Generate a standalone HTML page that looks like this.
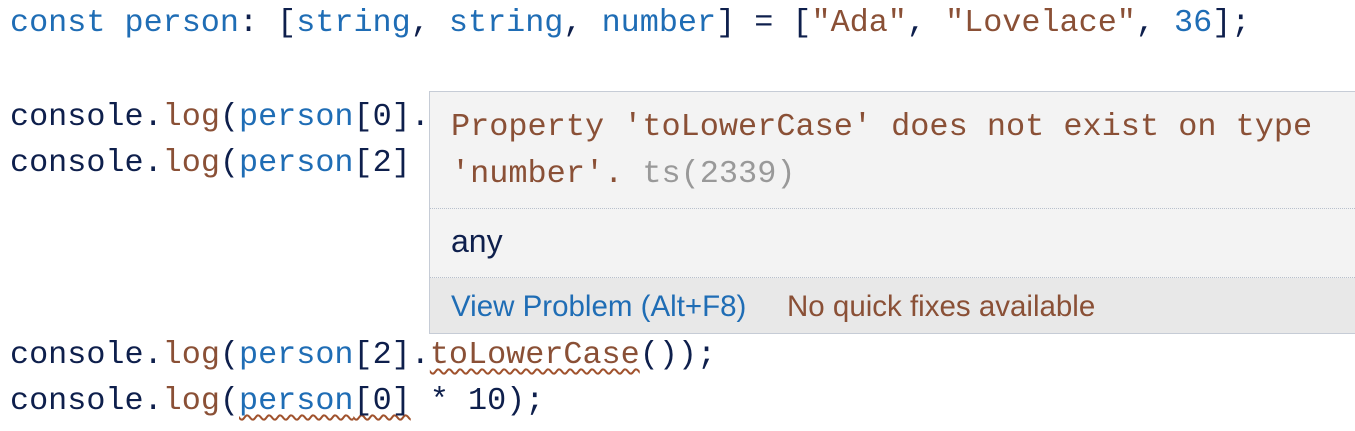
<!DOCTYPE html>
<html><head><meta charset="utf-8"><style>
body{margin:0;width:1355px;height:431px;background:#fff;overflow:hidden;position:relative;font-family:"Liberation Mono",monospace;}
.l{position:absolute;left:10px;font-size:31.8px;line-height:46px;white-space:pre;color:#0e1f4c;}
.b{color:#1f6db5}.br{color:#8a5036}.g{color:#999}
.sq{text-decoration:underline wavy #a0522d;text-decoration-thickness:1.5px;text-underline-offset:5px;text-decoration-skip-ink:none}
.pop{position:absolute;left:429px;top:91px;width:925px;height:241px;background:#f3f3f3;border:1px solid #c6ccd6;}
.m{position:absolute;left:21px;font-size:31.9px;line-height:46px;white-space:pre;color:#8a5036}
.sep{position:absolute;left:0;right:0;border-top:1px dotted #b8c0cc}
.s{position:absolute;font-family:"Liberation Sans",sans-serif;white-space:pre}
</style></head><body>
<div class="l" style="top:0"><span class="b">const person</span>: [<span class="b">string</span>, <span class="b">string</span>, <span class="b">number</span>] = [<span class="br">"Ada"</span>, <span class="br">"Lovelace"</span>, <span class="b">36</span>];</div>
<div class="l" style="top:94px">console.<span class="br">log</span>(<span class="b">person</span>[0].</div>
<div class="l" style="top:140px">console.<span class="br">log</span>(<span class="b">person</span>[2]</div>
<div class="l" style="top:332px">console.<span class="br">log</span>(<span class="b">person</span>[2].<span class="br sq">toLowerCase</span>());</div>
<div class="l" style="top:378px">console.<span class="br">log</span>(<span class="sq"><span class="b">person</span>[0]</span> * 10);</div>
<div class="pop">
<div class="m" style="top:12px">Property 'toLowerCase' does not exist on type</div>
<div class="m" style="top:59px">'number'. <span class="g">ts(2339)</span></div>
<div class="sep" style="top:116px"></div>
<div class="s" style="left:21px;top:131px;font-size:32px;color:#0e1f4c">any</div>
<div class="sep" style="top:185px"></div>
<div style="position:absolute;left:0;right:0;top:186px;bottom:0;background:#e8e8e8"></div>
<div class="s" style="left:21px;top:198px;font-size:29.5px;color:#1f6db5">View Problem (Alt+F8)</div>
<div class="s" style="left:357px;top:198px;font-size:29.5px;color:#8a5036">No quick fixes available</div>
</div>
</body></html>
